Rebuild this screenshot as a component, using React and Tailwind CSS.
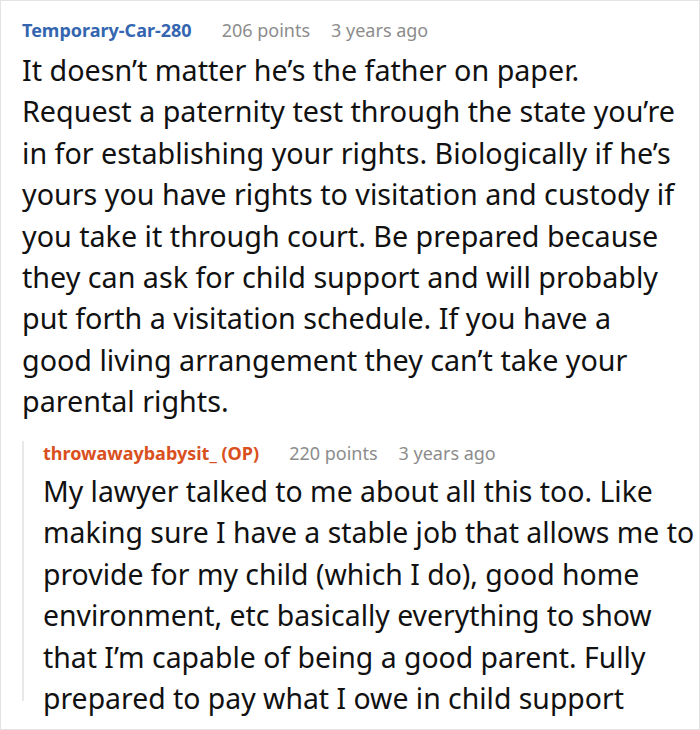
import React from 'react';

const Meta = ({ name, nameClass, points, ago, className = '' }) => (
  <div className={`flex items-baseline text-[18px] leading-[24px] ${className}`}>
    <span className={`font-bold ${nameClass}`}>{name}</span>
    <span className="ml-[30px] text-[#8c8c8c]">{points}</span>
    <span className="ml-[21px] text-[#8c8c8c]">{ago}</span>
  </div>
);

const App = () => {
  return (
    <div
      className="w-[700px] h-[730px] overflow-hidden bg-white border border-[#e3e3e3] text-[#111]"
      style={{ fontFamily: '"Noto Sans", "Open Sans", sans-serif' }}
    >
      <div className="pl-[21px] pr-[13px] pt-[17px]">
        <Meta name="Temporary-Car-280" nameClass="text-[#3466b0]" points="206 points" ago="3 years ago" />
        <p className="mt-[7px] text-[28.7px] leading-[41.4px]">
          It doesn’t matter he’s the father on paper. Request a paternity test through the state you’re in for
          establishing your rights. Biologically if he’s yours you have rights to visitation and custody if you
          take it through court. Be prepared because they can ask for child support and will probably put forth a
          visitation schedule. If you have a good living arrangement they can’t take your parental rights.
        </p>
        <div className="mt-[30px] -mr-[12px] h-[260px] border-l-2 border-[#e8e8e8] pl-[19px]">
          <Meta
            className="-mt-[11px]"
            name="throwawaybabysit_ (OP)"
            nameClass="text-[#d9501e]"
            points="220 points"
            ago="3 years ago"
          />
          <p className="mt-[6px] text-[28.4px] leading-[41.5px]">
            My lawyer talked to me about all this too. Like making sure I have a stable job that allows me to
            provide for my child (which I do), good home environment, etc basically everything to show that I’m
            capable of being a good parent. Fully prepared to pay what I owe in child support
          </p>
        </div>
      </div>
    </div>
  );
};

export default App;
